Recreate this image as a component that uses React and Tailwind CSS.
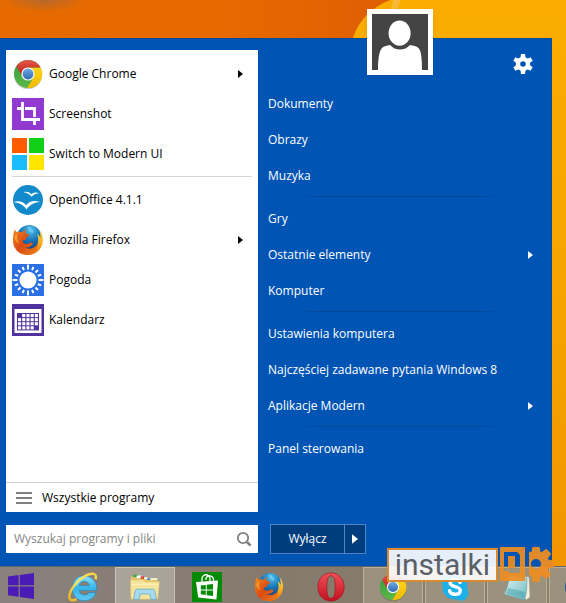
import { useState } from "react";

// ---- Icons ------------------------------------------------------------------
function ChromeIcon({ className }) {
  return (
    <svg viewBox="0 0 32 32" className={className} aria-hidden="true">
      <defs>
        <linearGradient id="chrome-red" x1="0" y1="0" x2="0" y2="1">
          <stop offset="0" stopColor="#e5574b" />
          <stop offset="1" stopColor="#c01d12" />
        </linearGradient>
        <linearGradient id="chrome-yellow" x1="0" y1="0" x2="0" y2="1">
          <stop offset="0" stopColor="#fbd51a" />
          <stop offset="1" stopColor="#f3b900" />
        </linearGradient>
        <linearGradient id="chrome-green" x1="0" y1="0" x2="0" y2="1">
          <stop offset="0" stopColor="#2f9a3c" />
          <stop offset="1" stopColor="#5cb947" />
        </linearGradient>
        <linearGradient id="chrome-blue" x1="0" y1="0" x2="0" y2="1">
          <stop offset="0" stopColor="#6fa9df" />
          <stop offset="1" stopColor="#2c6cb5" />
        </linearGradient>
      </defs>
      <ellipse cx="16" cy="17.5" rx="14" ry="13.8" fill="#000" opacity="0.18" />
      <circle cx="16" cy="16" r="14" fill="url(#chrome-green)" />
      <path d="M16 9.5H28.6A14 14 0 0 1 15.2 30L21.6 19.2Z" fill="url(#chrome-yellow)" />
      <path d="M4.4 8.2A14 14 0 0 1 28.6 9.6H16A6.4 6.4 0 0 0 10 18Z" fill="url(#chrome-red)" />
      <circle cx="16" cy="16" r="6.6" fill="#f4f4f4" />
      <circle cx="16" cy="16" r="5.4" fill="url(#chrome-blue)" />
    </svg>
  );
}

function ScreenshotIcon({ className }) {
  return (
    <svg viewBox="0 0 32 32" className={className} aria-hidden="true">
      <path fill="#9239cf" d="M0 0h32v32H0z" />
      <path d="M5 10.5H9M10.5 4V21.5H28M13 10.5H22.5V19M22.5 22V27" fill="none" stroke="#fff" strokeWidth="2.8" />
    </svg>
  );
}

function ModernTilesIcon({ className }) {
  return (
    <svg viewBox="0 0 32 32" className={className} aria-hidden="true">
      <path fill="#ff5c00" d="M0 0h15v15H0z" />
      <path fill="#12cf18" d="M17 0h15v15H17z" />
      <path fill="#1bbcfb" d="M0 17h15v15H0z" />
      <path fill="#ffe600" d="M17 17h15v15H17z" />
    </svg>
  );
}

function OpenOfficeIcon({ className }) {
  return (
    <svg viewBox="0 0 32 32" className={className} aria-hidden="true">
      <circle cx="16" cy="16" r="15" fill="#128acb" />
      <path
        d="M11.5 8.2C14.5 7.2 17.5 8 19.3 10.2C21.5 8.3 24.5 7.9 27.3 9.2C24.2 9.2 21.5 10.4 19.6 12.8C17.6 10 14.9 8.7 11.5 8.2Z"
        fill="#fff"
      />
      <path
        d="M1.4 18.3C6.5 16.2 11.4 17.6 14 21.2C17.2 17.4 22.3 15.8 28 18.1C22.4 18.4 18 20.6 14.6 25.4C11.4 21 7.2 18.7 1.4 18.3Z"
        fill="#fff"
      />
    </svg>
  );
}

function FirefoxIcon({ className }) {
  return (
    <svg viewBox="0 0 32 32" className={className} aria-hidden="true">
      <defs>
        <radialGradient id="fox-globe" cx="0.55" cy="0.2" r="0.8">
          <stop offset="0" stopColor="#4fc2ec" />
          <stop offset="0.5" stopColor="#1b76b8" />
          <stop offset="1" stopColor="#123f80" />
        </radialGradient>
        <linearGradient id="fox-body" x1="0" y1="0.1" x2="0.9" y2="0.9">
          <stop offset="0" stopColor="#f0841c" />
          <stop offset="0.5" stopColor="#dc4a12" />
          <stop offset="1" stopColor="#e8771a" />
        </linearGradient>
        <linearGradient id="fox-tail" x1="0" y1="0" x2="0" y2="1">
          <stop offset="0" stopColor="#ffe14a" />
          <stop offset="0.6" stopColor="#f9a51c" />
          <stop offset="1" stopColor="#e66a14" />
        </linearGradient>
      </defs>
      <circle cx="17.2" cy="13.6" r="12.6" fill="url(#fox-globe)" />
      <path d="M15 3C18 2.4 20 3.5 19.5 5.2C22 6 22.4 8 20.5 9.2L17 7Z" fill="#7fd3f2" opacity="0.6" />
      <path
        d="M27 5.4C30.2 8.8 31.4 13 30.9 17.2C30 25.2 23.7 31 16 31C13.5 31 12 30 12.6 28.7C18.6 28.6 24 25 25.6 19.5C26.6 16 26.3 12.6 25.2 9.7C27.2 11.2 28 12.6 28.4 14.4C28.7 11.2 28.3 8.2 27 5.4Z"
        fill="url(#fox-tail)"
      />
      <path
        d="M2.8 5.6C3.4 7 4.2 7.8 5.4 8.2C7.2 7.5 9 7.7 10.4 8.4C11.4 6.8 12.6 5.8 14.4 5.2C13.4 6.6 13.2 8.2 13.8 9.6L17.2 10.4C17.6 11.8 16 12.6 14.2 13.6C13.8 14.4 14 15.4 13.8 16.2C12.4 15.6 11 16 10.4 17C11 20 14.6 20.8 17.6 19C19.4 18.2 20.6 18.8 20.8 19.8C19.4 22.8 15.8 24.2 12.8 23.2C17 26 23 24.6 25.8 19.8C26 26.4 21.4 31 15.2 31C7.4 31 1 24.8 1 17C1 12.6 1.2 9 2.8 5.6Z"
        fill="url(#fox-body)"
      />
      <path d="M2.4 14C2.8 11.8 4 10 5.6 9.2C4.6 12.2 4.8 16 7 19.4C4.8 18.4 3.2 16.4 2.4 14Z" fill="#f9a83a" opacity="0.8" />
    </svg>
  );
}

const RAY_ANGLES = [0, 22.5, 45, 67.5, 90, 112.5, 135, 157.5, 180, 202.5, 225, 247.5, 270, 292.5, 315, 337.5];

function WeatherIcon({ className }) {
  return (
    <svg viewBox="0 0 32 32" className={className} aria-hidden="true">
      <path fill="#2b6fe4" d="M0 0h32v32H0z" />
      <circle cx="16" cy="16" r="8.6" fill="#fff" />
      {RAY_ANGLES.map((a, i) => (
        <path
          key={a}
          d={i % 4 === 0 ? "M16 0.5V5.5" : "M16 1.8V5.4"}
          stroke="#fff"
          strokeWidth="1.9"
          transform={`rotate(${a} 16 16)`}
        />
      ))}
    </svg>
  );
}

function CalendarIcon({ className }) {
  const cells = [];
  for (let row = 0; row < 4; row++) {
    for (let col = 0; col < 5; col++) {
      const marked = (row === 0 && col === 0) || (row === 3 && col === 4);
      if (!marked) cells.push([6 + col * 4.2, 10 + row * 4.1]);
    }
  }
  return (
    <svg viewBox="0 0 32 32" className={className} aria-hidden="true">
      <path fill="#5133a0" d="M0 0h32v32H0z" />
      <path fill="#fff" d="M2.5 5h27v24h-27z" />
      <path fill="#5133a0" d="M5 9h22v17.4H5z" />
      {cells.map(([x, y]) => (
        <rect key={`${x}-${y}`} x={x} y={y} width="3.1" height="3.1" fill="#fff" />
      ))}
    </svg>
  );
}

function WindowsIcon({ className }) {
  return (
    <svg viewBox="0 0 26 26" className={className} aria-hidden="true">
      <path fill="#4a1bb5" d="M0 3.6L10.6 2.1V12.3H0ZM11.8 1.9L26 0V12.3H11.8ZM0 13.5H10.6V23.8L0 22.3ZM11.8 13.5H26V26L11.8 24Z" />
    </svg>
  );
}

function ExplorerIcon({ className }) {
  return (
    <svg viewBox="0 0 32 32" className={className} aria-hidden="true">
      <defs>
        <linearGradient id="ie-blue" x1="0" y1="0" x2="0" y2="1">
          <stop offset="0" stopColor="#8ee2fa" />
          <stop offset="0.5" stopColor="#35b4ea" />
          <stop offset="1" stopColor="#5fc9f2" />
        </linearGradient>
        <linearGradient id="ie-ring" x1="1" y1="0" x2="0" y2="1">
          <stop offset="0" stopColor="#f6d23c" />
          <stop offset="0.5" stopColor="#fbe36a" />
          <stop offset="1" stopColor="#e9b31c" />
        </linearGradient>
      </defs>
      <path
        fillRule="evenodd"
        d="M17 4C24 4 30.6 9.4 30.6 17V19.6H12C12.5 22.6 14.4 24.4 17.6 24.4C19.8 24.4 21.4 23.4 22.2 22H29.8C27.9 27.4 23.2 30.6 17.4 30.6C10 30.6 4.6 25.2 4.6 17.6C4.6 9.8 10 4 17 4ZM12 14.6H22.8C22.4 11.8 20.4 10 17.4 10C14.6 10 12.5 11.8 12 14.6Z"
        fill="url(#ie-blue)"
        stroke="#2388bd"
        strokeWidth="0.7"
      />
      <path
        d="M29.3 7.8C31.6 1.2 25.5 0.3 18.4 4.2C9.8 8.9 1.7 19.2 1.4 26.2C1.3 30.6 5.2 31 9.2 28.9"
        fill="none"
        stroke="url(#ie-ring)"
        strokeWidth="2.6"
      />
    </svg>
  );
}

function FolderIcon({ className }) {
  return (
    <svg viewBox="0 0 34 30" className={className} aria-hidden="true">
      <path d="M1 3H11L13 5H31V28H1Z" fill="#e5c96c" />
      <path d="M3.5 1H9V4H3.5Z" fill="#3cab44" />
      <path d="M7.5 2H13V5H7.5Z" fill="#fff" />
      <path d="M12 3H16V6H12Z" fill="#dd4a3a" />
      <path d="M16 4H20V6H16Z" fill="#fff" />
      <path d="M19.5 5H23V7H19.5Z" fill="#3d86d4" />
      <path d="M23 5H31V7H23Z" fill="#f7f3df" />
      <path d="M0.5 7H15L17 9H33.5L31.5 29H1Z" fill="#f5e49b" stroke="#d9bd62" strokeWidth="0.6" />
      <path d="M1.5 12H32.5" stroke="#fff6c8" strokeWidth="1.2" opacity="0.7" />
      <path d="M6 19C6 18 7 17.5 8 17.5H26C27 17.5 28 18 28 19L30 29H23.5L22.5 23H11.5L10.5 29H4Z" fill="#a8d9ef" stroke="#5aa6cd" strokeWidth="0.8" />
    </svg>
  );
}

function StoreIcon({ className }) {
  return (
    <svg viewBox="0 0 30 30" className={className} aria-hidden="true">
      <path fill="#058a05" d="M0 0h30v30H0z" />
      <path d="M10 10V7A4 4 0 0 1 18 6.5V9.6M14 8V6A4 4 0 0 1 21.5 7V9.6" fill="none" stroke="#fff" strokeWidth="1.3" />
      <path d="M4 10L26 8.4L24.4 27.4L6.2 25.6Z" fill="#fff" />
      <path d="M8.8 13.6L13.8 13V17.6H8.8ZM14.7 12.8L21 12V17.6H14.7ZM8.8 18.5H13.8V23L8.8 22.3ZM14.7 18.5H21V24.1L14.7 23.2Z" fill="#058a05" />
    </svg>
  );
}

function OperaIcon({ className }) {
  return (
    <svg viewBox="0 0 30 32" className={className} aria-hidden="true">
      <defs>
        <linearGradient id="opera-red" x1="0" y1="0" x2="0" y2="1">
          <stop offset="0" stopColor="#f0505a" />
          <stop offset="1" stopColor="#c3101f" />
        </linearGradient>
      </defs>
      <path
        fillRule="evenodd"
        d="M15 1C23 1 29 7 29 16S23 31 15 31S1 25 1 16S7 1 15 1ZM15 4C11.5 4 10.6 9 10.6 16S11.5 28 15 28S19.4 23 19.4 16S18.5 4 15 4Z"
        fill="url(#opera-red)"
        stroke="#9d1520"
        strokeWidth="0.7"
      />
    </svg>
  );
}

function SkypeIcon({ className }) {
  return (
    <svg viewBox="0 0 32 32" className={className} aria-hidden="true">
      <path
        d="M9.5 1.5C11.5 1.5 13 2.2 14.2 3.1C23 1.8 30.6 9 29 17.8C32.4 23.6 28.4 30.6 22.4 30.6C20.6 30.6 19 30 17.9 29.1C9 30.5 1.4 23.2 3 14.4C-0.6 8.6 3.2 1.5 9.5 1.5Z"
        fill="#1ab0ea"
      />
      <path
        d="M21.5 11.2C20.6 8.8 18.6 8.3 16 8.3C12.8 8.3 10.8 9.6 10.8 11.8C10.8 16.8 21.6 14.2 21.6 19.6C21.6 22.2 19.3 23.7 16 23.7C12.8 23.7 10.8 22.5 10.2 20"
        fill="none"
        stroke="#fff"
        strokeWidth="3.6"
        strokeLinecap="round"
      />
    </svg>
  );
}

function NotepadIcon({ className }) {
  return (
    <svg viewBox="0 0 30 30" className={className} aria-hidden="true">
      <defs>
        <linearGradient id="pad-page" x1="0" y1="0" x2="1" y2="1">
          <stop offset="0" stopColor="#e4f5ef" />
          <stop offset="1" stopColor="#69b9c4" />
        </linearGradient>
      </defs>
      <path d="M8 3L27 5L28 25L24 28Z" fill="#f4f1df" stroke="#a59f86" strokeWidth="0.6" />
      <path d="M7 3L25 6C25 14 25 21 22.5 28L2 22C5 17 7 11 7 3Z" fill="url(#pad-page)" stroke="#6f9b98" strokeWidth="0.6" />
      <path d="M6.5 16L23 20L22 26.5L3.5 21.5Z" fill="#3f9aa4" opacity="0.45" />
    </svg>
  );
}

function GlobeIcon({ className }) {
  return (
    <svg viewBox="0 0 32 32" className={className} aria-hidden="true">
      <circle cx="16" cy="16" r="15" fill="#1f5ba0" />
    </svg>
  );
}

function GearIcon({ className }) {
  return (
    <svg viewBox="0 0 20 20" className={className} aria-hidden="true">
      <g fill="currentColor">
        <path d="M8 0H12L12.6 5H7.4ZM8 20H12L12.6 15H7.4Z" />
        <path d="M8 0H12L12.6 5H7.4ZM8 20H12L12.6 15H7.4Z" transform="rotate(60 10 10)" />
        <path d="M8 0H12L12.6 5H7.4ZM8 20H12L12.6 15H7.4Z" transform="rotate(120 10 10)" />
      </g>
      <circle cx="10" cy="10" r="5" fill="none" stroke="currentColor" strokeWidth="4.4" />
    </svg>
  );
}

function Arrow({ className }) {
  return (
    <svg viewBox="0 0 5 8" className={className} aria-hidden="true">
      <path d="M0 0L5 4L0 8Z" fill="currentColor" />
    </svg>
  );
}

// ---- Data -------------------------------------------------------------------
const PINNED = [
  { name: "Google Chrome", Icon: ChromeIcon, submenu: true },
  { name: "Screenshot", Icon: ScreenshotIcon },
  { name: "Switch to Modern UI", Icon: ModernTilesIcon },
];

const RECENT = [
  { name: "OpenOffice 4.1.1", Icon: OpenOfficeIcon },
  { name: "Mozilla Firefox", Icon: FirefoxIcon, submenu: true },
  { name: "Pogoda", Icon: WeatherIcon },
  { name: "Kalendarz", Icon: CalendarIcon },
];

const PLACES = [
  [{ name: "Dokumenty" }, { name: "Obrazy" }, { name: "Muzyka" }],
  [{ name: "Gry" }, { name: "Ostatnie elementy", submenu: true }, { name: "Komputer" }],
  [
    { name: "Ustawienia komputera" },
    { name: "Najczęściej zadawane pytania Windows 8" },
    { name: "Aplikacje Modern", submenu: true },
  ],
  [{ name: "Panel sterowania" }],
];

const TASKS = [
  { name: "Internet Explorer", Icon: ExplorerIcon },
  { name: "Explorer", Icon: FolderIcon, open: true, active: true },
  { name: "Store", Icon: StoreIcon },
  { name: "Firefox", Icon: FirefoxIcon },
  { name: "Opera", Icon: OperaIcon },
  { name: "Chrome", Icon: ChromeIcon, open: true },
  { name: "Skype", Icon: SkypeIcon, open: true },
  { name: "Notepad", Icon: NotepadIcon, open: true },
  { name: "Browser", Icon: GlobeIcon, open: true },
];

// ---- Start menu -------------------------------------------------------------
function ProgramList({ items }) {
  return (
    <ul>
      {items.map(({ name, Icon, submenu }) => (
        <li key={name}>
          <button type="button" className="flex h-10 w-full items-center gap-[5px] pr-[15px] pl-1.5 text-left hover:bg-sky-50">
            <Icon className="size-8 shrink-0" />
            <span className="flex-1">{name}</span>
            {submenu && <Arrow className="h-2 w-[5px]" />}
          </button>
        </li>
      ))}
    </ul>
  );
}

function Programs() {
  return (
    <section className="mt-3 flex flex-col bg-white text-black">
      <div className="flex-1 pt-1">
        <ProgramList items={PINNED} />
        <hr className="mx-1.5 mt-0.5 mb-[3px] border-[#d8d8d8]" />
        <ProgramList items={RECENT} />
      </div>
      <button type="button" className="flex h-[30px] items-center gap-2.5 border-t border-[#cfcfcf] px-2.5 text-left">
        <svg viewBox="0 0 16 12" className="h-3 w-4" aria-hidden="true">
          <path d="M0 1H16M0 6H16M0 11H16" stroke="#808080" strokeWidth="2" />
        </svg>
        Wszystkie programy
      </button>
    </section>
  );
}

function Places() {
  return (
    <nav className="relative pt-12">
      <div className="absolute -top-[29px] left-[109px] size-[66px] bg-white p-[5px] shadow-sm">
        <svg viewBox="0 0 56 56" className="size-full" aria-hidden="true">
          <path fill="#444" d="M0 0h56v56H0z" />
          <path
            d="M6 56C6 46 7 37 10 34C12 32 15 31.5 18 31C21 34 24 35.5 28 35.5C32 35.5 35 34 38 31C41 31.5 44.5 32 46.5 34C49.5 37 50 46 50 56Z"
            fill="#fff"
          />
          <ellipse cx="27.6" cy="19.2" rx="11" ry="12.6" fill="#fff" />
        </svg>
      </div>
      <button type="button" aria-label="Ustawienia" className="absolute top-4 right-[18px]">
        <GearIcon className="size-5" />
      </button>
      {PLACES.map((group, i) => (
        <div key={group[0].name}>
          {i > 0 && (
            <div className="mr-[46px] mb-1 ml-9 pt-0.5">
              <div className="h-px bg-[linear-gradient(90deg,transparent,#004798_12%,#004798_88%,transparent)]" />
            </div>
          )}
          <ul>
            {group.map((item) => (
              <li key={item.name}>
                <a href="#" className="flex h-9 items-center justify-between pr-[18px] pl-2.5">
                  {item.name}
                  {item.submenu && <Arrow className="h-2 w-[5px]" />}
                </a>
              </li>
            ))}
          </ul>
        </div>
      ))}
    </nav>
  );
}

function StartMenu() {
  const [query, setQuery] = useState("");

  return (
    <main className="mr-[14px] flex flex-1 flex-col border-t border-r border-[#0a4a94] bg-[#0054b4] pb-3 pl-1.5 text-white">
      <div className="-mt-px grid flex-1 grid-cols-[252px_1fr]">
        <Programs />
        <Places />
      </div>
      <div className="mt-3 flex items-center gap-3">
        <label className="flex h-7 w-[252px] items-center bg-white pr-1.5 pl-2">
          <input
            type="text"
            aria-label="Szukaj"
            value={query}
            onChange={(e) => setQuery(e.target.value)}
            placeholder="Wyszukaj programy i pliki"
            className="min-w-0 flex-1 text-black outline-none placeholder:text-[#858585]"
          />
          <svg viewBox="0 0 16 16" className="size-4" fill="none" stroke="#808080" aria-hidden="true">
            <circle cx="7" cy="7" r="5.2" strokeWidth="1.8" />
            <path d="M11 11L14.6 14.6" strokeWidth="2.6" />
          </svg>
        </label>
        <div className="flex h-[30px] border border-[#4a86c8] bg-[#003c7e]">
          <button type="button" className="w-[73px]">
            Wyłącz
          </button>
          <button type="button" aria-label="Więcej" className="flex w-[21px] items-center justify-center border-l border-[#4a86c8]">
            <Arrow className="h-2.5 w-1.5" />
          </button>
        </div>
      </div>
    </main>
  );
}

// ---- Desktop ----------------------------------------------------------------
function Wallpaper() {
  return (
    <svg viewBox="0 0 566 603" preserveAspectRatio="none" className="absolute inset-0 -z-10 size-full" aria-hidden="true">
      <defs>
        <linearGradient id="wall-orange">
          <stop offset="0" stopColor="#e66a00" />
          <stop offset="0.4" stopColor="#e86900" />
          <stop offset="0.68" stopColor="#de5f02" />
        </linearGradient>
        <linearGradient id="wall-yellow" x1="0" y1="0" x2="0" y2="1">
          <stop offset="0" stopColor="#faad00" />
          <stop offset="0.5" stopColor="#f6a300" />
          <stop offset="1" stopColor="#f09300" />
        </linearGradient>
        <radialGradient id="wall-smudge">
          <stop offset="0" stopColor="#b5682c" />
          <stop offset="1" stopColor="#b5682c" stopOpacity="0" />
        </radialGradient>
      </defs>
      <path fill="url(#wall-orange)" d="M0 0h566v603H0z" />
      <ellipse cx="44" cy="0" rx="42" ry="12" fill="url(#wall-smudge)" />
      <path d="M353 38C358 22 370 8 390 0H566V603H353Z" fill="url(#wall-yellow)" />
      <path d="M393 0H401L397 9L391 9Z" fill="#f8c873" opacity="0.45" />
    </svg>
  );
}

function Taskbar() {
  return (
    <footer className="flex h-[37px] overflow-hidden border-t border-[#5f6468] bg-linear-to-r from-[#8a817e] via-[#857a6c] to-[#8b8069]">
      <button type="button" aria-label="Start" className="flex w-[52px] shrink-0 items-center pt-0.5 pl-2">
        <WindowsIcon className="size-[26px]" />
      </button>
      {TASKS.map(({ name, Icon, open, active }) => (
        <button
          key={name}
          type="button"
          aria-label={name}
          className={`mx-px flex w-[60px] shrink-0 items-center justify-center border-x border-t pt-0.5 ${
            active
              ? "border-[#c8c2ba] bg-[#aaa39a]"
              : open
                ? "border-[#b9b19c] bg-[#9b927d]"
                : "border-transparent"
          }`}
        >
          <Icon className="size-[30px]" />
        </button>
      ))}
    </footer>
  );
}

const TOOTH_ANGLES = [0, 45, 90, 135, 180, 315];

function Watermark() {
  return (
    <div className="pointer-events-none absolute right-3 bottom-5 flex items-center gap-0.5">
      <span className="flex h-[34px] items-center border-2 border-[#d98a2e] bg-white/90 px-1.5 font-['Roboto',sans-serif] text-3xl text-[#5c6066]">
        instalki
      </span>
      <svg viewBox="0 0 54 36" className="h-9 w-[54px]" aria-hidden="true">
        <defs>
          <clipPath id="gear-half">
            <path d="M29 0H54V36H29Z" />
          </clipPath>
        </defs>
        <path
          fill="#ee8d22"
          fillRule="evenodd"
          opacity="0.92"
          d="M0 0H25V34H0ZM4 5V24H8V9H15V21H9V26H20V8L17 5Z"
        />
        <g clipPath="url(#gear-half)" opacity="0.95">
          <circle cx="36" cy="17" r="9" fill="none" stroke="#ee8d22" strokeWidth="8" />
          {TOOTH_ANGLES.map((a) => (
            <path key={a} d="M32.5 -1H39.5L40.5 6H31.5Z" fill="#ee8d22" transform={`rotate(${a} 36 17)`} />
          ))}
        </g>
      </svg>
    </div>
  );
}

export default function App() {
  return (
    <div className="relative isolate flex min-h-screen flex-col overflow-hidden pt-[38px] font-['Open_Sans','Noto_Sans',sans-serif] text-xs">
      <Wallpaper />
      <StartMenu />
      <Taskbar />
      <Watermark />
    </div>
  );
}
